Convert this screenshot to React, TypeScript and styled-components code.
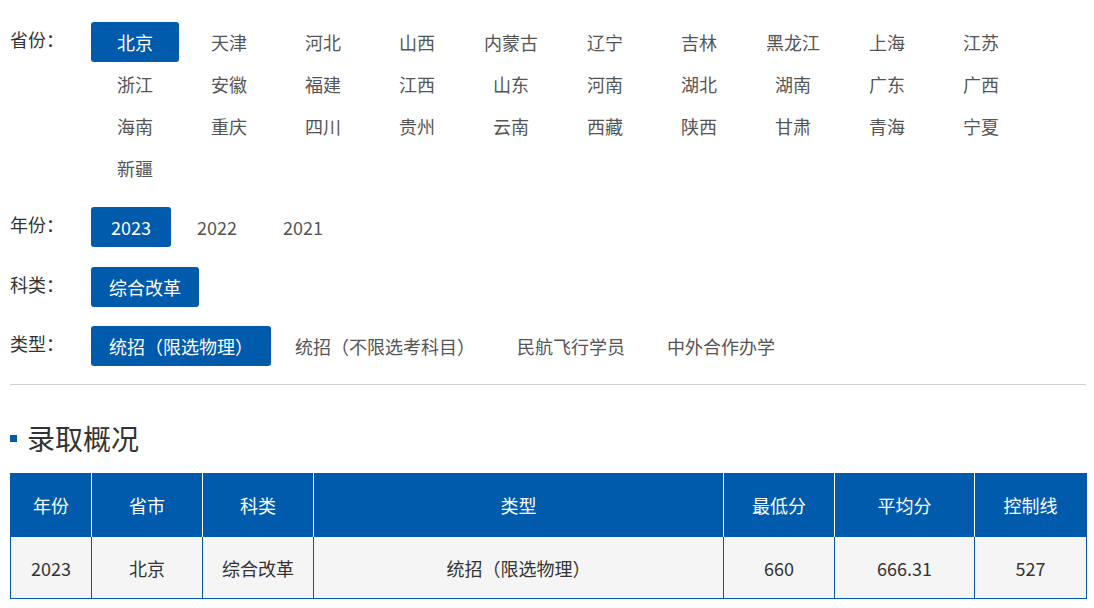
import React from "react";
import styled, { createGlobalStyle } from "styled-components";

const Global = createGlobalStyle`
  html, body { margin: 0; padding: 0; background: #fff; }
  body { font-family: "Noto Sans CJK SC", "Noto Sans", sans-serif; color: #333; }
  * { box-sizing: border-box; }
`;

const BLUE = "#005bac";

const Page = styled.div`
  width: 1076px;
  margin-left: 10px;
  padding-top: 22px;
`;

const FilterGroup = styled.div<{ $gap?: number }>`
  display: flex;
  align-items: flex-start;
  margin-bottom: ${(p) => p.$gap ?? 20}px;
`;

const Label = styled.div`
  width: 81px;
  flex: none;
  font-size: 18px;
  line-height: 34px;
  color: #333;
`;

const Options = styled.div`
  display: flex;
  flex-wrap: wrap;
  gap: 2px 6px;
  flex: 1;
`;

const Option = styled.div<{ $active?: boolean; $fixed?: boolean; $pad?: number }>`
  height: 40px;
  line-height: 40px;
  font-size: 18px;
  text-align: center;
  white-space: nowrap;
  border-radius: 3px;
  cursor: pointer;
  ${(p) => (p.$fixed ? "width: 88px;" : `padding: 0 ${p.$pad ?? 18}px;`)}
  background: ${(p) => (p.$active ? BLUE : "transparent")};
  color: ${(p) => (p.$active ? "#fff" : "#555")};
`;

const Divider = styled.hr`
  border: none;
  border-top: 1px solid #d2d2d2;
  margin: -2px 0 0 0;
  height: 0;
`;

const Title = styled.h2`
  display: flex;
  align-items: center;
  gap: 10px;
  margin: 35px 0 17px 0;
  font-size: 28px;
  line-height: 36px;
  font-weight: normal;
  color: #333;
  &::before {
    content: "";
    width: 7px;
    height: 7px;
    background: ${BLUE};
    flex: none;
  }
`;

const Table = styled.table`
  width: 1076px;
  border-collapse: collapse;
  table-layout: fixed;
  font-size: 18px;
  text-align: center;
  border: 1px solid ${BLUE};
`;

const Th = styled.th`
  background: ${BLUE};
  color: #fff;
  font-weight: normal;
  height: 63px;
  border-left: 1px solid #fff;
  &:first-child { border-left: 1px solid ${BLUE}; }
`;

const Td = styled.td`
  background: #f5f5f5;
  color: #333;
  height: 62px;
  border: 1px solid ${BLUE};
`;

const provinces = [
  "北京","天津","河北","山西","内蒙古","辽宁","吉林","黑龙江","上海","江苏",
  "浙江","安徽","福建","江西","山东","河南","湖北","湖南","广东","广西",
  "海南","重庆","四川","贵州","云南","西藏","陕西","甘肃","青海","宁夏",
  "新疆",
];
const years = ["2023", "2022", "2021"];
const kinds = ["综合改革"];
const types = ["统招（限选物理）", "统招（不限选考科目）", "民航飞行学员", "中外合作办学"];

const cols = [
  { name: "年份", w: 81 },
  { name: "省市", w: 111 },
  { name: "科类", w: 111 },
  { name: "类型", w: 410 },
  { name: "最低分", w: 111 },
  { name: "平均分", w: 140 },
  { name: "控制线", w: 112 },
];
const row = ["2023", "北京", "综合改革", "统招（限选物理）", "660", "666.31", "527"];

export default function App() {
  return (
    <Page>
      <Global />
      <FilterGroup $gap={19}>
        <Label>省份：</Label>
        <Options>
          {provinces.map((p, i) => (
            <Option key={p} $fixed $active={i === 0}>{p}</Option>
          ))}
        </Options>
      </FilterGroup>
      <FilterGroup>
        <Label>年份：</Label>
        <Options>
          {years.map((y, i) => (
            <Option key={y} $pad={20} $active={i === 0}>{y}</Option>
          ))}
        </Options>
      </FilterGroup>
      <FilterGroup $gap={19}>
        <Label>科类：</Label>
        <Options>
          {kinds.map((k, i) => (
            <Option key={k} $active={i === 0}>{k}</Option>
          ))}
        </Options>
      </FilterGroup>
      <FilterGroup>
        <Label>类型：</Label>
        <Options>
          {types.map((t, i) => (
            <Option key={t} $active={i === 0}>{t}</Option>
          ))}
        </Options>
      </FilterGroup>
      <Divider />
      <Title>录取概况</Title>
      <Table>
        <colgroup>
          {cols.map((c) => (
            <col key={c.name} style={{ width: c.w }} />
          ))}
        </colgroup>
        <thead>
          <tr>
            {cols.map((c) => (
              <Th key={c.name}>{c.name}</Th>
            ))}
          </tr>
        </thead>
        <tbody>
          <tr>
            {row.map((v, i) => (
              <Td key={i}>{v}</Td>
            ))}
          </tr>
        </tbody>
      </Table>
    </Page>
  );
}
